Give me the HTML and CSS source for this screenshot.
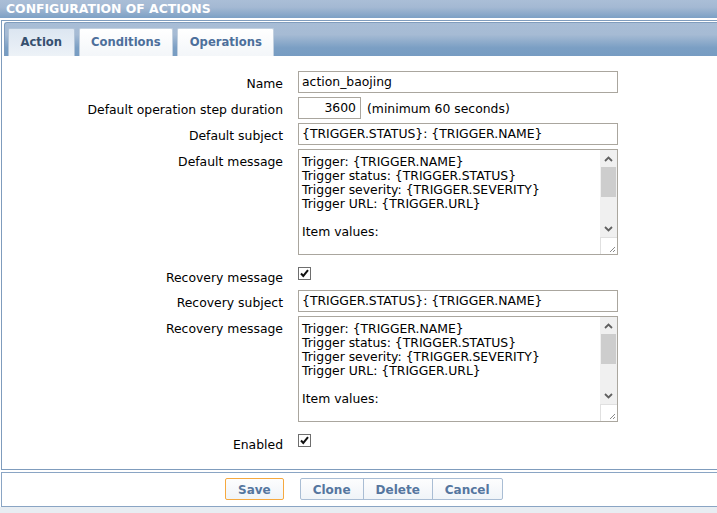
FILE: index.html
```html
<!DOCTYPE html>
<html>
<head>
<meta charset="utf-8">
<title>Configuration of actions</title>
<link rel="stylesheet" href="styles.css">
</head>
<body>
<div class="page">
  <div class="header">CONFIGURATION OF ACTIONS</div>
  <div class="panel">
    <div class="tabbar">
      <div class="tab tab-active">Action</div>
      <div class="tab">Conditions</div>
      <div class="tab">Operations</div>
    </div>
    <div class="form">
      <div class="label">Name</div>
      <div class="field"><div class="input input-wide">action_baojing</div></div>

      <div class="label">Default operation step duration</div>
      <div class="field field-inline"><div class="input input-num">3600</div><span class="hint">(minimum 60 seconds)</span></div>

      <div class="label">Default subject</div>
      <div class="field"><div class="input input-wide">{TRIGGER.STATUS}: {TRIGGER.NAME}</div></div>

      <div class="label">Default message</div>
      <div class="field">
        <div class="ta">
          <div class="ta-text">Trigger: {TRIGGER.NAME}
Trigger status: {TRIGGER.STATUS}
Trigger severity: {TRIGGER.SEVERITY}
Trigger URL: {TRIGGER.URL}

Item values:

1. {ITEM.NAME1} ({HOST.NAME1}:{ITEM.KEY1}): {ITEM.VALUE1}</div>
          <div class="sb">
            <div class="sb-btn"><svg width="9" height="6" viewBox="0 0 9 6"><path d="M1 5 L4.5 1.5 L8 5" fill="none" stroke="#606060" stroke-width="1.8"/></svg></div>
            <div class="sb-thumb"></div>
            <div class="sb-track"></div>
            <div class="sb-btn"><svg width="9" height="6" viewBox="0 0 9 6"><path d="M1 1 L4.5 4.5 L8 1" fill="none" stroke="#606060" stroke-width="1.8"/></svg></div>
            <div class="sb-grip"><svg width="17" height="17" viewBox="0 0 17 17"><path d="M15 10 L10 15 M15 13 L13 15" stroke="#8a8a8a" stroke-width="1"/></svg></div>
          </div>
        </div>
      </div>

      <div class="label label-check">Recovery message</div>
      <div class="field"><span class="check"><svg width="13" height="13" viewBox="0 0 13 13"><rect x="0.5" y="0.5" width="12" height="12" fill="#fff" stroke="#6e6e6e"/><path d="M3 6.5 L5.3 9 L10 3.2" fill="none" stroke="#111" stroke-width="2"/></svg></span></div>

      <div class="label">Recovery subject</div>
      <div class="field"><div class="input input-wide">{TRIGGER.STATUS}: {TRIGGER.NAME}</div></div>

      <div class="label">Recovery message</div>
      <div class="field">
        <div class="ta">
          <div class="ta-text">Trigger: {TRIGGER.NAME}
Trigger status: {TRIGGER.STATUS}
Trigger severity: {TRIGGER.SEVERITY}
Trigger URL: {TRIGGER.URL}

Item values:

1. {ITEM.NAME1} ({HOST.NAME1}:{ITEM.KEY1}): {ITEM.VALUE1}</div>
          <div class="sb">
            <div class="sb-btn"><svg width="9" height="6" viewBox="0 0 9 6"><path d="M1 5 L4.5 1.5 L8 5" fill="none" stroke="#606060" stroke-width="1.8"/></svg></div>
            <div class="sb-thumb"></div>
            <div class="sb-track"></div>
            <div class="sb-btn"><svg width="9" height="6" viewBox="0 0 9 6"><path d="M1 1 L4.5 4.5 L8 1" fill="none" stroke="#606060" stroke-width="1.8"/></svg></div>
            <div class="sb-grip"><svg width="17" height="17" viewBox="0 0 17 17"><path d="M15 10 L10 15 M15 13 L13 15" stroke="#8a8a8a" stroke-width="1"/></svg></div>
          </div>
        </div>
      </div>

      <div class="label label-check">Enabled</div>
      <div class="field"><span class="check"><svg width="13" height="13" viewBox="0 0 13 13"><rect x="0.5" y="0.5" width="12" height="12" fill="#fff" stroke="#6e6e6e"/><path d="M3 6.5 L5.3 9 L10 3.2" fill="none" stroke="#111" stroke-width="2"/></svg></span></div>
    </div>
  </div>
  <div class="footer">
    <button class="btn btn-save">Save</button>
    <div class="btn-group">
      <button class="btn">Clone</button>
      <button class="btn">Delete</button>
      <button class="btn">Cancel</button>
    </div>
  </div>
</div>
</body>
</html>
```
FILE: styles.css
```css
html, body {
  margin: 0;
  padding: 0;
}
body {
  background: #e8edf2;
  overflow: hidden;
  font-family: "DejaVu Sans", Verdana, sans-serif;
  font-size: 12.4px;
  color: #000;
}
.page {
  width: 760px;
  background: #fff;
}
.header {
  height: 18px;
  line-height: 18px;
  padding-left: 6px;
  background: linear-gradient(#aabed7, #a4b9d3 40%, #7ca0c5);
  color: #fff;
  font-weight: bold;
  font-size: 12.4px;
}
.panel {
  margin: 2px 0 0 1px;
  border: 1px solid #7f9cbd;
  border-right: none;
}
.tabbar {
  margin: 1px 0 0 2px;
  border-top: 1px solid #7f9cbd;
  border-left: 1px solid #7f9cbd;
  border-top-left-radius: 3px;
  background: linear-gradient(#a8bdd6, #a6bbd4 35%, #7b9fc4 75%, #779cc2);
  padding: 5px 0 0 3px;
  display: flex;
  gap: 4px;
  height: 28px;
}
.tab {
  height: 27px;
  line-height: 27px;
  padding: 0 11.5px;
  border: 1px solid #c3d1e0;
  border-bottom: none;
  border-radius: 2px 2px 0 0;
  background: linear-gradient(#ffffff, #f3f6f9);
  color: #4d6f9b;
  font-weight: bold;
  font-size: 11.6px;
}
.tab-active {
  background: linear-gradient(#dce6f1, #e6edf5 60%, #edf2f7);
  color: #37506f;
  border-color: #b3c5d9;
}
.form {
  display: grid;
  grid-template-columns: 281px 320px;
  column-gap: 15px;
  row-gap: 4px;
  padding: 15px 0 16px;
}
.label {
  text-align: right;
  line-height: 15px;
  padding-top: 5px;
  white-space: nowrap;
}
.label-check {
  padding-top: 11px;
}
.field-inline {
  display: flex;
  align-items: center;
  gap: 6px;
}
.input {
  box-sizing: border-box;
  height: 22px;
  line-height: 20px;
  border: 1px solid #aaa69e;
  padding: 0 3px;
  white-space: nowrap;
  overflow: hidden;
  background: #fff;
}
.input-wide {
  width: 320px;
}
.input-num {
  width: 63px;
  text-align: right;
  padding-right: 4px;
}
.hint {
  white-space: nowrap;
}
.ta {
  box-sizing: border-box;
  width: 320px;
  height: 106px;
  border: 1px solid #aaa69e;
  display: flex;
  background: #fff;
}
.ta-text {
  flex: 1;
  overflow: hidden;
  white-space: pre;
  line-height: 14px;
  padding: 5px 0 0 3px;
}
.sb {
  width: 17px;
  display: flex;
  flex-direction: column;
  background: #f0f0f0;
}
.sb-btn {
  height: 17px;
  display: flex;
  align-items: center;
  justify-content: center;
}
.sb-thumb {
  height: 30px;
  margin: 0 1px;
  background: #cdcdcd;
}
.sb-track {
  flex: 1;
}
.sb-grip {
  height: 17px;
  background: #fff;
  border-top: 1px solid #e0e0e0;
  border-left: 1px solid #e0e0e0;
  box-sizing: border-box;
}
.sb-grip svg {
  display: block;
  margin: -1px 0 0 -1px;
}
.check {
  display: block;
  width: 13px;
  height: 13px;
  margin: 8px 0 6px;
}
.check svg {
  display: block;
}
.footer {
  margin: 2px 0 0 1px;
  border-top: 1px solid #8aa5c4;
  border-bottom: 1px solid #8aa5c4;
  border-left: 1px solid #8aa5c4;
  padding: 5px 0 6px 223px;
  display: flex;
  gap: 16px;
  background: #fff;
}
.btn {
  box-sizing: border-box;
  height: 22px;
  padding: 2px 12px 0;
  line-height: 18px;
  margin: 0;
  font-family: "DejaVu Sans", Verdana, sans-serif;
  font-weight: bold;
  font-size: 12px;
  color: #55769f;
  background: linear-gradient(#fdfdfe, #f0f4f8);
  border: 1px solid #a9bdd4;
  border-radius: 2px;
}
.btn-save {
  border-color: #f6a93f;
}
.btn-group {
  display: flex;
}
.btn-group .btn {
  border-radius: 0;
}
.btn-group .btn + .btn {
  margin-left: -1px;
}
.btn-group .btn:first-child {
  border-radius: 2px 0 0 2px;
}
.btn-group .btn:last-child {
  border-radius: 0 2px 2px 0;
}
```
